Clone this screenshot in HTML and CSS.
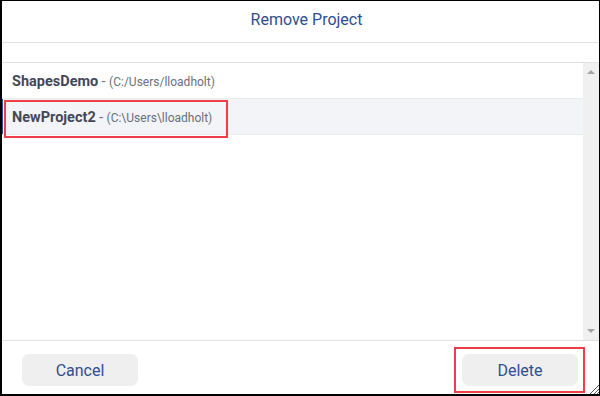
FILE: index.html
```html
<!DOCTYPE html>
<html lang="en">
<head>
  <meta charset="UTF-8">
  <meta name="viewport" content="width=device-width, initial-scale=1.0">
  <title>Remove Project</title>
  <link rel="stylesheet" href="styles.css">
</head>
<body>
  <div class="dialog">
    <div class="dialog-header">Remove Project</div>
    <div class="spacer"></div>
    <div class="list-wrap">
      <ul class="project-list">
        <li class="project">
          <span class="project-name">ShapesDemo</span><span class="dash"> - </span><span class="project-path">(C:/Users/lloadholt)</span>
        </li>
        <li class="project selected">
          <span class="project-name">NewProject2</span><span class="dash"> - </span><span class="project-path">(C:\Users\lloadholt)</span>
        </li>
      </ul>
      <div class="scrollbar">
        <span class="arrow up"></span>
        <span class="arrow down"></span>
      </div>
    </div>
    <div class="dialog-footer">
      <button class="btn">Cancel</button>
      <button class="btn">Delete</button>
    </div>

    <!-- annotation boxes -->
    <div class="mark mark-row"></div>
    <div class="mark mark-delete"></div>

    <svg class="grip" width="10" height="10" viewBox="0 0 10 10">
      <path d="M10 1 L1 10 M10 5 L5 10 M10 8 L8 10" stroke="#555" stroke-width="1" fill="none"/>
    </svg>
  </div>
</body>
</html>
```

FILE: styles.css
```css
body {
  margin: 0;
  font-family: Roboto, "Liberation Sans", Arial, sans-serif;
  background: #fff;
}
.dialog {
  position: relative;
  width: 600px;
  height: 396px;
  box-sizing: border-box;
  border-style: solid;
  border-color: #000;
  border-width: 1px 1px 2px 2px;
  display: flex;
  flex-direction: column;
  background: #fff;
}
.dialog-header {
  height: 41px;
  line-height: 37px;
  padding-left: 12px;
  text-align: center;
  font-size: 16px;
  color: #2d4f8e;
  border-bottom: 1px solid #e0e0e0;
}
.spacer {
  height: 19px;
  border-bottom: 1px solid #e0e0e0;
}
.list-wrap {
  height: 277px;
  display: flex;
  border-bottom: 1px solid #e0e0e0;
}
.project-list {
  flex: 1;
  list-style: none;
  margin: 0;
  padding: 0;
}
.project {
  height: 35px;
  line-height: 35px;
  padding-left: 10px;
  border-bottom: 1px solid #ebebeb;
  white-space: nowrap;
}
.project.selected {
  background: #f3f4f8;
  box-shadow: inset 1px 0 0 #2d4f8e;
}
.project-name {
  font-size: 14.5px;
  font-weight: bold;
  color: #434856;
}
.dash {
  font-size: 14px;
  color: #6b6f78;
}
.project-path {
  font-size: 12px;
  color: #6b6f78;
}
.scrollbar {
  width: 16px;
  background: #f0f0f0;
  display: flex;
  flex-direction: column;
  justify-content: space-between;
  align-items: center;
  padding: 7px 0;
  box-sizing: border-box;
}
.arrow {
  width: 0;
  height: 0;
  border-left: 4px solid transparent;
  border-right: 4px solid transparent;
}
.arrow.up {
  border-bottom: 4px solid #a3a3a3;
}
.arrow.down {
  border-top: 4px solid #a3a3a3;
}
.dialog-footer {
  flex: 1;
  display: flex;
  justify-content: space-between;
  align-items: flex-start;
  padding: 13px 21px 0 20px;
}
.btn {
  width: 116px;
  height: 32px;
  border: none;
  border-radius: 7px;
  background: #efefef;
  color: #2d4f8e;
  font-family: Roboto, "Liberation Sans", Arial, sans-serif;
  font-size: 16px;
  cursor: pointer;
}
.mark {
  position: absolute;
  border: 2px solid #ee3e46;
  box-sizing: border-box;
}
.mark-row {
  left: 2px;
  top: 99px;
  width: 224px;
  height: 38px;
}
.mark-delete {
  left: 452px;
  top: 346px;
  width: 131px;
  height: 46px;
}
.grip {
  position: absolute;
  right: 0;
  bottom: 0;
}
```
